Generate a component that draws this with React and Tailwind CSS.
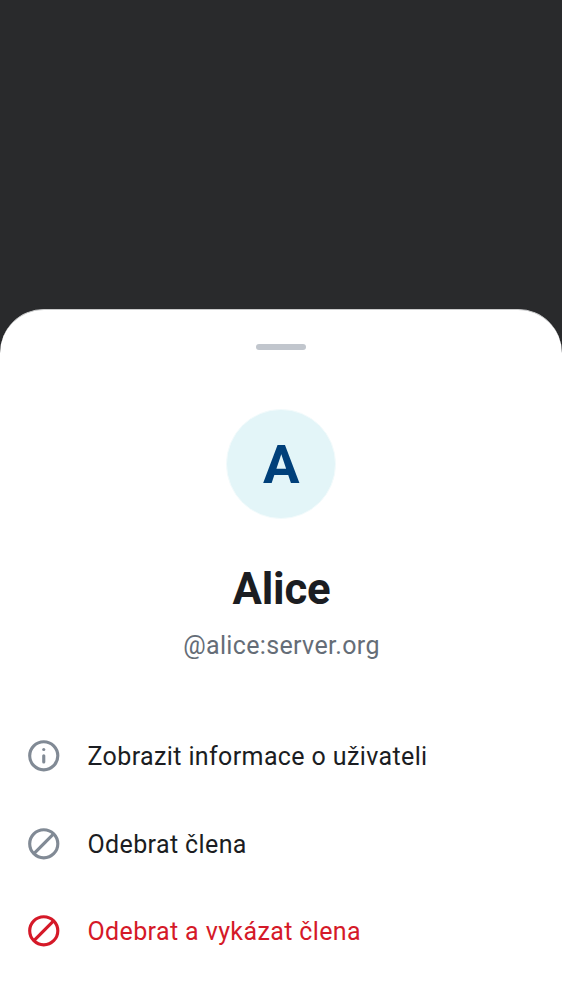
const rows = [
  { label: 'Zobrazit informace o uživateli', icon: 'info', tone: 'text-[#1b1d22]', iconTone: 'text-[#818a95]' },
  { label: 'Odebrat člena', icon: 'block', tone: 'text-[#1b1d22]', iconTone: 'text-[#818a95]' },
  { label: 'Odebrat a vykázat člena', icon: 'block', tone: 'text-[#d51928]', iconTone: 'text-[#d51928]' },
];

function Icon({ name }) {
  return (
    <svg viewBox="0 0 24 24" className="mb-[1.4px] block size-[37.5px]" fill="none" stroke="currentColor" strokeWidth="2">
      <circle cx="12" cy="12" r="9" />
      {name === 'info' ? (
        <g fill="currentColor" stroke="none">
          <circle cx="12" cy="8" r="1" />
          <rect x="11" y="11" width="2" height="6" rx="1" />
        </g>
      ) : (
        <path d="M5.7 18.3 18.3 5.7" />
      )}
    </svg>
  );
}

export default function App() {
  return (
    <div className="flex h-[1000px] w-[562px] flex-col overflow-hidden bg-[#292a2c] pt-[309px] font-['Roboto',sans-serif]">
      <main className="flex flex-1 flex-col items-center rounded-t-[44px] border-t border-[#c9cacb] bg-white">
        <div className="mt-[34px] h-[6px] w-[50px] rounded-full bg-[#c1c6cd]" />
        <div className="mt-[59px] flex size-[110px] shrink-0 items-center justify-center rounded-full border-[0.5px] border-[#f3fbfc] bg-[#e3f5f8] pl-[0.4px] pt-[2px] text-[54.4px] font-bold leading-none text-[#00407a]">
          A
        </div>
        <h1 className="mt-[44px] pl-px text-[43.75px] font-bold leading-[53px] tracking-[-0.2px] text-[#1b1d22]">Alice</h1>
        <p className="mt-[14px] pl-px text-[25px] leading-[31px] tracking-[0.35px] text-[#656d77]">@alice:server.org</p>
        <ul className="mt-[52px] w-full">
          {rows.map((row) => (
            <li key={row.label} className="flex h-[87.5px] items-center gap-[25px] pl-[25px]">
              <span className={row.iconTone}>
                <Icon name={row.icon} />
              </span>
              <span className={`text-[25px] leading-[37px] tracking-[0.38px] ${row.tone}`}>{row.label}</span>
            </li>
          ))}
        </ul>
      </main>
    </div>
  );
}
